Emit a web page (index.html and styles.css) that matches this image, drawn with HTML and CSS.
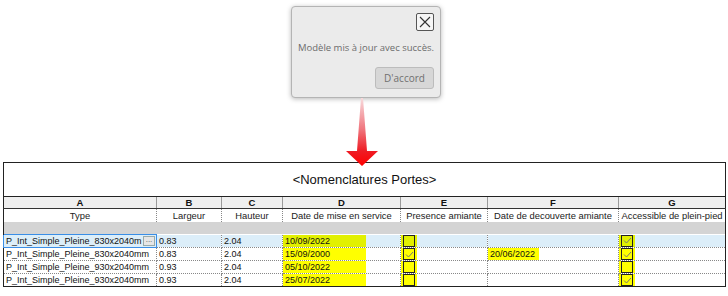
FILE: index.html
```html
<!DOCTYPE html>
<html lang="fr">
<head>
<meta charset="utf-8">
<title>Nomenclatures Portes</title>
<link rel="stylesheet" href="styles.css">
</head>
<body>
<div class="top">
  <div class="dialog">
    <div class="close">
      <svg width="14" height="14" viewBox="0 0 14 14"><path d="M2 2 L12 12 M12 2 L2 12" stroke="#333" stroke-width="1.1" fill="none"/></svg>
    </div>
    <div class="msg">Modèle mis à jour avec succès.</div>
    <div class="okbtn">D'accord</div>
  </div>
  <svg class="arrow" width="36" height="68" viewBox="0 0 36 68">
    <defs>
      <linearGradient id="ag" x1="0" y1="0" x2="0" y2="1">
        <stop offset="0" stop-color="#f8dadc"/>
        <stop offset="0.45" stop-color="#f07880"/>
        <stop offset="0.78" stop-color="#ee1c24"/>
        <stop offset="1" stop-color="#ff0000"/>
      </linearGradient>
    </defs>
    <polygon points="17,0 19,0 23,53 34,53 18,68 2,53 13,53" fill="url(#ag)"/>
  </svg>
</div>
<table class="sched">
  <colgroup>
    <col class="c-a"><col class="c-b"><col class="c-c"><col class="c-d"><col class="c-e"><col class="c-f"><col class="c-g">
  </colgroup>
  <tr class="title"><td colspan="7">&lt;Nomenclatures Portes&gt;</td></tr>
  <tr class="letters"><th>A</th><th>B</th><th>C</th><th>D</th><th>E</th><th>F</th><th>G</th></tr>
  <tr class="head"><td>Type</td><td>Largeur</td><td>Hauteur</td><td>Date de mise en service</td><td>Presence amiante</td><td>Date de decouverte amiante</td><td>Accessible de plein-pied</td></tr>
  <tr class="group"><td colspan="7"></td></tr>
  <tr class="row sel">
    <td class="first"><div class="fcell"><span class="ftxt">P_Int_Simple_Pleine_830x2040m</span><span class="more">...</span></div></td>
    <td>0.83</td><td>2.04</td>
    <td><span class="hl hl-d">10/09/2022</span></td>
    <td><span class="cbw"><span class="cb"></span></span></td>
    <td></td>
    <td><span class="cbw"><span class="cb"><svg class="ck" width="9" height="9" viewBox="0 0 9 9"><path d="M1 4.5 L3.5 7 L8 2" stroke="#777" stroke-width="1" fill="none"/></svg></span></span></td>
  </tr>
  <tr class="row">
    <td>P_Int_Simple_Pleine_830x2040mm</td>
    <td>0.83</td><td>2.04</td>
    <td><span class="hl hl-d">15/09/2000</span></td>
    <td><span class="cbw"><span class="cb"><svg class="ck" width="9" height="9" viewBox="0 0 9 9"><path d="M1 4.5 L3.5 7 L8 2" stroke="#777" stroke-width="1" fill="none"/></svg></span></span></td>
    <td><span class="hl hl-f">20/06/2022</span></td>
    <td><span class="cbw"><span class="cb"><svg class="ck" width="9" height="9" viewBox="0 0 9 9"><path d="M1 4.5 L3.5 7 L8 2" stroke="#777" stroke-width="1" fill="none"/></svg></span></span></td>
  </tr>
  <tr class="row">
    <td>P_Int_Simple_Pleine_930x2040mm</td>
    <td>0.93</td><td>2.04</td>
    <td><span class="hl hl-d">05/10/2022</span></td>
    <td><span class="cbw"><span class="cb"></span></span></td>
    <td></td>
    <td><span class="cbw"><span class="cb"></span></span></td>
  </tr>
  <tr class="row last">
    <td>P_Int_Simple_Pleine_930x2040mm</td>
    <td>0.93</td><td>2.04</td>
    <td><span class="hl hl-d">25/07/2022</span></td>
    <td><span class="cbw"><span class="cb"></span></span></td>
    <td></td>
    <td><span class="cbw"><span class="cb"><svg class="ck" width="9" height="9" viewBox="0 0 9 9"><path d="M1 4.5 L3.5 7 L8 2" stroke="#777" stroke-width="1" fill="none"/></svg></span></span></td>
  </tr>
</table>
</body>
</html>
```
FILE: styles.css
```css
html, body {
  margin: 0;
  padding: 0;
  background: #ffffff;
}
body {
  font-family: "Liberation Sans", Arial, sans-serif;
  width: 728px;
  height: 296px;
  overflow: hidden;
}
.top {
  padding-top: 6px;
}
.dialog {
  box-sizing: border-box;
  margin-left: 291px;
  width: 150px;
  height: 92px;
  background: #ebebeb;
  border: 1px solid #b4b4b4;
  border-radius: 4px;
  box-shadow: 0 1px 5px rgba(0,0,0,0.28);
  padding: 6px 6px 0 6px;
  display: flex;
  flex-direction: column;
  align-items: flex-end;
  font-family: "Open Sans", "Liberation Sans", sans-serif;
}
.close {
  box-sizing: border-box;
  width: 18px;
  height: 18px;
  border: 1px solid #555;
  border-radius: 2px;
  background: #f6f6f6;
  display: flex;
  align-items: center;
  justify-content: center;
}
.msg {
  align-self: stretch;
  text-align: center;
  margin-top: 10px;
  font-size: 9.5px;
  line-height: 14px;
  color: #6b6b6b;
  white-space: nowrap;
}
.okbtn {
  box-sizing: border-box;
  margin-top: 12px;
  width: 59px;
  height: 22px;
  background: #d7d7d7;
  border: 1px solid #bcbcbc;
  border-radius: 3px;
  color: #707070;
  font-size: 10px;
  line-height: 20px;
  text-align: center;
}
.arrow {
  display: block;
  margin-left: 344px;
  margin-bottom: -4px;
  position: relative;
  z-index: 1;
}
.sched {
  margin-left: 3px;
  width: 722px;
  table-layout: fixed;
  border-collapse: collapse;
  font-size: 9px;
  color: #111;
}
.c-a { width: 153px; }
.c-b { width: 65px; }
.c-c { width: 61px; }
.c-d { width: 118px; }
.c-e { width: 87px; }
.c-f { width: 131px; }
.c-g { width: 107px; }
.sched td, .sched th {
  padding: 0;
  overflow: hidden;
  white-space: nowrap;
}
.title td {
  height: 33px;
  border: 1px solid #222;
  text-align: center;
  font-size: 13px;
  color: #111;
}
.letters th {
  height: 11px;
  line-height: 11px;
  background: #efefef;
  font-size: 9.5px;
  font-weight: bold;
  border-top: 1px solid #333;
  border-bottom: 1px solid #333;
  border-left: 1px solid #9a9a9a;
  border-right: 1px solid #9a9a9a;
}
.letters th:first-child { border-left: 1px solid #222; }
.letters th:last-child { border-right: 1px solid #222; }
.head td {
  height: 13px;
  line-height: 13px;
  text-align: center;
  color: #222;
  font-size: 9.4px;
  border-right: 1px dotted #888;
}
.head td:first-child { border-left: 1px solid #222; }
.head td:last-child { border-right: 1px solid #222; }
.group td {
  height: 12px;
  background: #d4d4d4;
  border-left: 1px solid #222;
  border-right: 1px solid #222;
}
.row td {
  height: 12px;
  line-height: 12px;
  padding-left: 2px;
  border-right: 1px dotted #888;
  border-bottom: 1px dotted #888;
}
.row td:first-child { border-left: 1px solid #222; }
.row td:last-child { border-right: 1px solid #222; }
.row.last td { border-bottom: 1px solid #222; }
.row.sel td { background: #dceef9; }
.row.sel td.first {
  border: 1px solid #3a8ee6;
  padding-left: 2px;
}
.fcell {
  display: flex;
  align-items: center;
}
.ftxt {
  flex: 1;
  min-width: 0;
  overflow: hidden;
  white-space: nowrap;
}
.more {
  flex: none;
  box-sizing: border-box;
  width: 12px;
  height: 10px;
  margin: 0 1px 0 1px;
  border: 1px solid #9aa;
  background: #e6e6e6;
  color: #555;
  font-size: 8px;
  line-height: 6px;
  text-align: center;
}
.hl {
  display: block;
  height: 12px;
  background: #ffff00;
  margin-left: -2px;
  padding-left: 2px;
}
.hl-d { width: 81px; }
.hl-f { width: 49px; }
.row.sel .hl { background: #e2f000; }
.cbw {
  display: flex;
  align-items: center;
  width: 16px;
  height: 12px;
  margin-left: -2px;
  background: #ffff00;
}
.row.sel .cbw { background: #e2f000; }
.cb {
  box-sizing: border-box;
  width: 12px;
  height: 12px;
  margin-left: 2px;
  border: 1px solid #222;
  display: flex;
  align-items: center;
  justify-content: center;
}
.ck { display: block; }
```
